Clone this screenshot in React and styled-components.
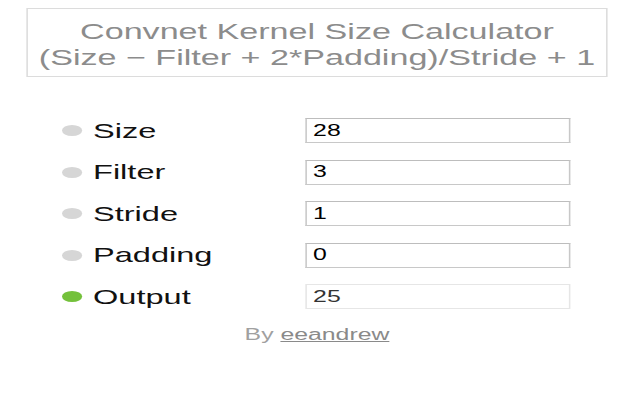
import React, { useState } from 'react'
import styled, { createGlobalStyle } from 'styled-components'

const GlobalStyle = createGlobalStyle`
  html, body {
    margin: 0;
    padding: 0;
    background: #fff;
    font-family: "Liberation Sans", Arial, sans-serif;
  }
`

// the reference is drawn with a wide face, so the whole page is stretched sideways
const Stage = styled.div`
  width: 413px;
  transform: scaleX(1.55);
  transform-origin: 0 0;
`

const Container = styled.div`
  width: 375px;
  margin-left: 17px;
  padding-top: 8px;
`

const TitleBox = styled.div`
  border: 1px solid #dcdcdc;
  padding: 10px 0 5px;
  text-align: center;
  color: #8c8c8c;
  font-size: 22px;
  line-height: 26px;
`

const Form = styled.div`
  display: flex;
  flex-direction: column;
  gap: 16.5px;
  margin-top: 41px;
`

const Row = styled.div`
  display: flex;
  align-items: center;
  height: 25px;
  padding-left: 23px;
`

const Bullet = styled.span`
  width: 13px;
  height: 11px;
  border-radius: 50%;
  background: ${p => (p.active ? '#74c13b' : '#d6d6d6')};
  margin-right: 7px;
  flex: none;
`

const Label = styled.label`
  width: 137px;
  font-size: 21px;
  color: #111;
`

const Field = styled.input`
  box-sizing: border-box;
  width: 171px;
  height: 25px;
  margin: 0;
  padding: 0 4px;
  border: 1px solid ${p => (p.readOnly ? '#e6e6e6' : '#c8c8c8')};
  border-top-color: ${p => (p.readOnly ? '#e6e6e6' : '#bdbdbd')};
  font-family: "Liberation Sans", Arial, sans-serif;
  font-size: 16px;
  color: ${p => (p.readOnly ? '#333' : '#000')};
  background: #fff;
  outline: none;
`

const Footer = styled.div`
  margin-top: 17px;
  text-align: center;
  font-size: 16px;
  color: #a0a0a0;
`

const Link = styled.a`
  color: #8a8a8a;
  text-decoration: underline;
`

const App = () => {
  const [values, setValues] = useState({ size: '28', filter: '3', stride: '1', padding: '0' })

  const n = (k) => Number(values[k]) || 0
  const output = n('stride') !== 0
    ? (n('size') - n('filter') + 2 * n('padding')) / n('stride')
    : ''

  const fields = [
    ['size', 'Size'],
    ['filter', 'Filter'],
    ['stride', 'Stride'],
    ['padding', 'Padding'],
  ]

  return (
    <>
      <GlobalStyle />
      <Stage>
        <Container>
          <TitleBox>
            Convnet Kernel Size Calculator
            <br />
            (Size − Filter + 2*Padding)/Stride + 1
          </TitleBox>
          <Form>
            {fields.map(([key, label]) => (
              <Row key={key}>
                <Bullet />
                <Label>{label}</Label>
                <Field
                  value={values[key]}
                  onChange={e => setValues({ ...values, [key]: e.target.value })}
                />
              </Row>
            ))}
            <Row>
              <Bullet active />
              <Label>Output</Label>
              <Field readOnly value={output} />
            </Row>
          </Form>
          <Footer>
            By <Link href="#">eeandrew</Link>
          </Footer>
        </Container>
      </Stage>
    </>
  )
}

export default App
